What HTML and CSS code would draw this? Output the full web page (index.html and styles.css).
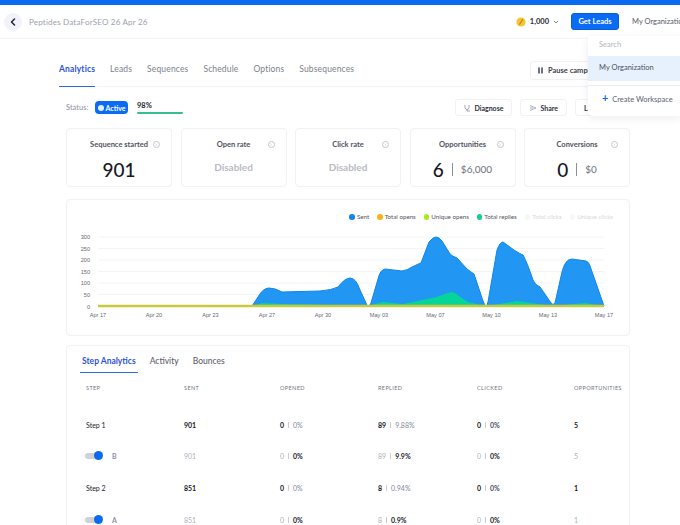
FILE: index.html
```html
<!DOCTYPE html>
<html lang="en">
<head>
    <meta charset="UTF-8">
    <meta name="viewport" content="width=device-width, initial-scale=1.0">
    <title>Peptides DataForSEO - Analytics</title>
    <link rel="stylesheet" href="styles.css">
</head>
<body>
    <div class="app">
        <div class="top-strip"></div>

        <!-- Header -->
        <header class="header">
            <button class="back-btn">
                <svg width="8" height="8" viewBox="0 0 8 8"><path d="M5.5 1 L2.5 4 L5.5 7" fill="none" stroke="#23233a" stroke-width="1.5" stroke-linecap="round" stroke-linejoin="round"/></svg>
            </button>
            <span class="campaign-name">Peptides DataForSEO 26 Apr 26</span>
            <span class="credits">
                <svg width="10" height="10" viewBox="0 0 10 10"><circle cx="5" cy="5" r="4.6" fill="#f7c531"/><path d="M6.5 2.6 L3.6 7.2" stroke="#b98a1c" stroke-width="1.2" stroke-linecap="round"/></svg>
                <b>1,000</b>
                <svg class="chev" width="6" height="4" viewBox="0 0 6 4"><path d="M1 1 L3 3 L5 1" fill="none" stroke="#666" stroke-width="0.8"/></svg>
            </span>
            <button class="get-leads">Get Leads</button>
            <span class="org-name">My Organizatio..</span>
        </header>

        <!-- Workspace menu -->
        <div class="org-menu">
            <div class="org-search">Search</div>
            <div class="org-item">My Organization</div>
            <div class="org-create"><span class="plus">+</span> Create Workspace</div>
        </div>

        <main class="content">
            <!-- Tabs -->
            <nav class="tabs">
                <a class="tab tab-active">Analytics</a>
                <a class="tab">Leads</a>
                <a class="tab">Sequences</a>
                <a class="tab">Schedule</a>
                <a class="tab">Options</a>
                <a class="tab">Subsequences</a>
                <button class="pause-btn">
                    <svg width="7" height="7" viewBox="0 0 7 7"><path d="M1 0.5h2v6H1zM4 0.5h2v6H4z" fill="#6b7288"/></svg>
                    Pause campaign
                </button>
            </nav>

            <!-- Status row -->
            <div class="status-row">
                <span class="status-label">Status:</span>
                <span class="active-badge"><i class="badge-dot"></i>Active</span>
                <div class="progress">
                    <span class="progress-num">98%</span>
                    <div class="progress-bar"></div>
                </div>
                <div class="status-actions">
                    <button class="small-btn">
                        <svg width="7" height="8" viewBox="0 0 7 8"><path d="M1 1v2.5a2 2 0 0 0 4 0V1M3 5.5V7h3" fill="none" stroke="#8a90a0" stroke-width="0.8"/></svg>
                        Diagnose
                    </button>
                    <button class="small-btn">
                        <svg width="8" height="8" viewBox="0 0 8 8"><path d="M1 1.5 L7 4 L1 6.5 M1 4h3" fill="none" stroke="#a3a8b5" stroke-width="0.9"/></svg>
                        Share
                    </button>
                    <button class="small-btn range-btn">
                        Last 4 weeks
                        <svg width="6" height="4" viewBox="0 0 6 4"><path d="M1 1 L3 3 L5 1" fill="none" stroke="#666" stroke-width="0.8"/></svg>
                    </button>
                </div>
            </div>

            <!-- Stat cards -->
            <section class="stats">
                <div class="stat-card">
                    <h3 class="stat-title">Sequence started<i class="info">i</i></h3>
                    <div class="stat-value">901</div>
                </div>
                <div class="stat-card">
                    <h3 class="stat-title">Open rate<i class="info">i</i></h3>
                    <div class="stat-disabled">Disabled</div>
                </div>
                <div class="stat-card">
                    <h3 class="stat-title">Click rate<i class="info">i</i></h3>
                    <div class="stat-disabled">Disabled</div>
                </div>
                <div class="stat-card">
                    <h3 class="stat-title">Opportunities<i class="info">i</i></h3>
                    <div class="stat-value">6<span class="stat-sep"></span><span class="stat-sub">$6,000</span></div>
                </div>
                <div class="stat-card">
                    <h3 class="stat-title">Conversions<i class="info">i</i></h3>
                    <div class="stat-value">0<span class="stat-sep"></span><span class="stat-sub">$0</span></div>
                </div>
            </section>

            <!-- Chart -->
            <section class="chart-card">
                <div class="legend">
                    <span class="legend-item"><i class="dot dot-sent"></i>Sent</span>
                    <span class="legend-item"><i class="dot dot-opens"></i>Total opens</span>
                    <span class="legend-item"><i class="dot dot-unique"></i>Unique opens</span>
                    <span class="legend-item"><i class="dot dot-replies"></i>Total replies</span>
                    <span class="legend-item legend-off"><i class="dot dot-off"></i>Total clicks</span>
                    <span class="legend-item legend-off"><i class="dot dot-off"></i>Unique clicks</span>
                </div>
                <svg class="chart" width="564" height="98" viewBox="66 225 564 98">
                    <g stroke="#f0f1f4" stroke-width="0.8">
                        <path d="M98 237H604M98 248.500H604M98 260H604M98 271.500H604M98 283H604M98 294.500H604"/>
                    </g>
                    <g class="axis-y" text-anchor="end">
                        <text x="90" y="239">300</text>
                        <text x="90" y="250.500">250</text>
                        <text x="90" y="262">200</text>
                        <text x="90" y="273.500">150</text>
                        <text x="90" y="285">100</text>
                        <text x="90" y="296.500">50</text>
                        <text x="90" y="308.500">0</text>
                    </g>
                    <path d="M252 306 L258 297 Q263 288 269 288 Q275 288 282 292 L320 291 Q332 290 338 287 Q345 278 350 278 Q356 278 360 290 L366 303 Q367 306 368 306 Q370 306 371 303 L378 279 Q380 270 385 269 L402 271 Q408 270 412 267 Q418 264 421 263 L429 242 Q433 237 436 237 Q439 237 442 241 L450 254 Q452 256 457 258 L467 269 Q471 272 474 274 L483 301 Q485 306 486 306 Q487 306 488 302 L497 250 Q500 242 503 242 L514 250 Q520 254 523 255 Q527 262 533 280 Q535 285 540 287 Q545 294 551 303 Q553 306 555 303 L562 272 Q565 259 572 259 L586 261 Q589 262 590 266 L604 306 Z" fill="#2196f3" stroke="#0e86ea" stroke-width="1"/>
                    <path d="M252 306 L262 303 L285 304 L340 305 L368 306 L383 302 L403 304 L437 297 Q446 293 452 292 Q456 293 459 296 L468 302 L486 306 L517 301 L553 306 L585 303 L604 306 Z" fill="#06d59a"/>
                    <path d="M98 306H604" stroke="#c9c93c" stroke-width="2.400"/>
                    <g class="axis-x" text-anchor="middle">
                        <text x="98" y="317">Apr 17</text>
                        <text x="154" y="317">Apr 20</text>
                        <text x="210.500" y="317">Apr 23</text>
                        <text x="267" y="317">Apr 27</text>
                        <text x="323" y="317">Apr 30</text>
                        <text x="379" y="317">May 03</text>
                        <text x="435.500" y="317">May 07</text>
                        <text x="491.500" y="317">May 10</text>
                        <text x="548" y="317">May 13</text>
                        <text x="604" y="317">May 17</text>
                    </g>
                </svg>
            </section>

            <!-- Step table -->
            <section class="table-card">
                <div class="table-tabs">
                    <a class="table-tab table-tab-active">Step Analytics</a>
                    <a class="table-tab">Activity</a>
                    <a class="table-tab">Bounces</a>
                </div>
                <div class="step-table">
                    <div class="th">Step</div><div class="th">Sent</div><div class="th">Opened</div><div class="th">Replied</div><div class="th">Clicked</div><div class="th">Opportunities</div>

                    <div class="td">Step 1</div>
                    <div class="td"><b>901</b></div>
                    <div class="td"><b>0</b><i class="sep"></i><span class="pct">0%</span></div>
                    <div class="td"><b>89</b><i class="sep"></i><span class="pct">9.88%</span></div>
                    <div class="td"><b>0</b><i class="sep"></i><span class="pct-dark">0%</span></div>
                    <div class="td"><b>5</b></div>

                    <div class="td"><span class="toggle"><i class="knob"></i></span><span class="variant">B</span></div>
                    <div class="td muted">901</div>
                    <div class="td muted">0<i class="sep"></i><span class="pct-bold">0%</span></div>
                    <div class="td muted">89<i class="sep"></i><span class="pct-bold">9.9%</span></div>
                    <div class="td muted">0<i class="sep"></i><span class="pct-bold">0%</span></div>
                    <div class="td muted">5</div>

                    <div class="td">Step 2</div>
                    <div class="td"><b>851</b></div>
                    <div class="td"><b>0</b><i class="sep"></i><span class="pct">0%</span></div>
                    <div class="td"><b>8</b><i class="sep"></i><span class="pct">0.94%</span></div>
                    <div class="td"><b>0</b><i class="sep"></i><span class="pct-dark">0%</span></div>
                    <div class="td"><b>1</b></div>

                    <div class="td"><span class="toggle"><i class="knob"></i></span><span class="variant">A</span></div>
                    <div class="td muted">851</div>
                    <div class="td muted">0<i class="sep"></i><span class="pct-bold">0%</span></div>
                    <div class="td muted">8<i class="sep"></i><span class="pct-bold">0.9%</span></div>
                    <div class="td muted">0<i class="sep"></i><span class="pct-bold">0%</span></div>
                    <div class="td muted">1</div>
                </div>
            </section>
        </main>
    </div>
</body>
</html>
```

FILE: styles.css
```css
* {
    margin: 0;
    padding: 0;
    box-sizing: border-box;
}

html, body {
    height: 100%;
    overflow: hidden;
}

body {
    font-family: 'Lato', 'Liberation Sans', sans-serif;
    background: #ffffff;
    color: #1c1c28;
}

button {
    font-family: inherit;
    cursor: pointer;
}

i {
    font-style: normal;
}

.app {
    position: relative;
    height: 525px;
    overflow: hidden;
}

.top-strip {
    height: 5px;
    background: #0a6bf0;
}

/* Header */
.header {
    height: 34px;
    display: flex;
    align-items: center;
    padding: 0 0 0 4px;
    border-bottom: 1px solid #f6f6f8;
}

.back-btn {
    width: 18px;
    height: 18px;
    border: none;
    border-radius: 50%;
    background: #f2f2fb;
    display: flex;
    align-items: center;
    justify-content: center;
}

.campaign-name {
    margin-left: 7px;
    font-size: 8px;
    color: #9da1ad;
    letter-spacing: 0.2px;
}

.credits {
    margin-left: auto;
    display: flex;
    align-items: center;
    gap: 4px;
    font-size: 7.500px;
    color: #2a2a38;
}

.get-leads {
    margin-left: 12px;
    width: 48px;
    height: 17px;
    border: 1px solid #0a5fd8;
    border-radius: 3px;
    background: #0a6bf5;
    color: #ffffff;
    font-size: 7.500px;
    font-weight: 700;
}

.org-name {
    margin-left: 13px;
    width: 48px;
    white-space: nowrap;
    font-size: 7.500px;
    color: #555a68;
}

.org-menu {
    position: absolute;
    top: 36px;
    left: 588px;
    width: 92px;
    height: 80px;
    background: #ffffff;
    border-radius: 0 0 0 5px;
    box-shadow: 0 2px 8px rgba(30, 30, 60, 0.08);
    font-size: 7.500px;
    z-index: 5;
}

.org-search {
    height: 20px;
    padding: 3px 0 0 11px;
    line-height: 12px;
    color: #b4b7c0;
}

.org-item {
    height: 25px;
    padding-left: 11px;
    line-height: 24px;
    background: #e6f1fd;
    color: #4a5064;
}

.org-create {
    margin-top: 4px;
    padding: 8px 0 0 14px;
    border-top: 1px solid #ececf0;
    color: #596074;
}

.plus {
    color: #0a6bf0;
    font-size: 11px;
    font-weight: 700;
    line-height: 8px;
    margin-right: 2px;
}

/* Main */
.content {
    padding: 0 50px 0 59px;
}

.tabs {
    height: 48px;
    display: flex;
    align-items: flex-end;
    gap: 15px;
    border-bottom: 1px solid #f2f2f5;
    font-size: 8.500px;
}

.tab {
    padding-bottom: 12px;
    color: #7b7f8c;
    letter-spacing: 0.15px;
    border-bottom: 1px solid transparent;
    margin-bottom: -1px;
}

.tab-active {
    color: #2a55d8;
    font-weight: 700;
    border-bottom: 1px solid #2a6be0;
}

.pause-btn {
    margin: 0 0 6px auto;
    width: 100px;
    height: 19px;
    padding-left: 6px;
    display: flex;
    align-items: center;
    gap: 4px;
    border: 1px solid #f2f2f5;
    border-radius: 3px;
    background: #ffffff;
    color: #3a3d4a;
    font-size: 7.500px;
    font-weight: 700;
    white-space: nowrap;
}

.status-row {
    height: 41px;
    padding-left: 7px;
    display: flex;
    align-items: center;
    font-size: 7.500px;
}

.status-label {
    color: #8d919e;
    width: 29px;
}

.active-badge {
    width: 33px;
    height: 13px;
    display: flex;
    align-items: center;
    justify-content: center;
    gap: 2px;
    border-radius: 4px;
    background: #0a6bf5;
    color: #ffffff;
    font-weight: 700;
    font-size: 7px;
}

.badge-dot {
    width: 6px;
    height: 6px;
    border-radius: 50%;
    background: #e3eefe;
}

.progress {
    margin-left: 9px;
    width: 46px;
    padding-top: 1px;
}

.progress-num {
    display: block;
    height: 10px;
    font-weight: 700;
    color: #23232e;
    font-size: 7.500px;
    line-height: 8px;
}

.progress-bar {
    height: 2px;
    border-radius: 1px;
    background: #35c08e;
}

.status-actions {
    margin-left: auto;
    margin-right: -29px;
    display: flex;
    gap: 8px;
}

.small-btn {
    height: 17px;
    padding: 0 8px;
    display: flex;
    align-items: center;
    gap: 3px;
    border: 1px solid #f2f2f5;
    border-radius: 3px;
    background: #ffffff;
    color: #2e3040;
    font-size: 7px;
    font-weight: 700;
}

.range-btn {
    width: 84px;
    justify-content: space-between;
}

/* Stat cards */
.stats {
    margin-left: 7px;
    display: grid;
    grid-template-columns: repeat(5, 1fr);
    gap: 8.500px;
}

.stat-card {
    height: 59px;
    border: 1px solid #f2f2f5;
    border-radius: 4px;
    background: #ffffff;
    text-align: center;
}

.stat-title {
    position: relative;
    padding-top: 11px;
    font-size: 7.500px;
    font-weight: 700;
    color: #50535f;
    line-height: 10px;
}

.info {
    position: absolute;
    top: 12px;
    right: 11px;
    width: 7px;
    height: 7px;
    border: 1px solid #c4c6ce;
    border-radius: 50%;
    color: #b0b3bc;
    font-size: 4px;
    font-weight: 400;
    line-height: 5px;
}

.stat-value {
    margin-top: 8px;
    display: flex;
    align-items: center;
    justify-content: center;
    height: 22px;
    font-size: 19px;
    font-weight: 500;
    color: #17171f;
}

.stat-sep {
    width: 1px;
    height: 13px;
    margin: 0 8px;
    background: #8a8fa3;
}

.stat-sub {
    font-size: 10px;
    color: #777c8c;
}

.stat-disabled {
    margin-top: 11px;
    font-size: 10px;
    font-weight: 700;
    color: #b9bbc2;
}

/* Chart */
.chart-card {
    margin: 12px 0 0 7px;
    height: 137px;
    border: 1px solid #f2f2f5;
    border-radius: 4px;
}

.legend {
    height: 25px;
    padding: 13px 16px 0 0;
    display: flex;
    justify-content: flex-end;
    gap: 8px;
    font-size: 6.200px;
    color: #50535f;
}

.legend-item {
    display: flex;
    align-items: center;
    gap: 2px;
    line-height: 8px;
    height: 8px;
}

.legend-off {
    color: #d6d8de;
}

.dot {
    width: 5.500px;
    height: 5.500px;
    border-radius: 50%;
}

.dot-sent { background: #1287ea; }
.dot-opens { background: #f9b31c; }
.dot-unique { background: #a8ea1a; }
.dot-replies { background: #12cf96; }
.dot-off { background: #f6f8f8; }

.chart {
    display: block;
    margin-left: -1px;
}

.chart text {
    font-family: 'Liberation Sans', sans-serif;
    font-size: 5.600px;
    fill: #666a75;
}

/* Step table */
.table-card {
    margin: 9px 0 0 7px;
    height: 220px;
    padding: 0 13px;
    border: 1px solid #f2f2f5;
    border-radius: 4px;
}

.table-tabs {
    height: 27px;
    display: flex;
    align-items: flex-end;
    gap: 10px;
    font-size: 8.500px;
    font-weight: 500;
    color: #5f6270;
}

.table-tab {
    padding: 0 2px 6px;
    border-bottom: 1px solid transparent;
}

.table-tab-active {
    color: #2a55d8;
    font-weight: 700;
    border-bottom: 1px solid #2a6be0;
}

.step-table {
    margin-top: 10px;
    padding-left: 6px;
    display: grid;
    grid-template-columns: 98px 96px 98px 99px 97px 60px;
    grid-auto-rows: 31.700px;
    font-size: 7px;
}

.th {
    height: 14px;
    font-size: 5.500px;
    letter-spacing: 0.4px;
    text-transform: uppercase;
    color: #71757f;
    white-space: nowrap;
    line-height: 10px;
}

.td {
    display: flex;
    align-items: center;
    height: 20px;
    color: #23232e;
}

.td b {
    color: #17171f;
}

.sep {
    width: 1px;
    height: 6px;
    margin: 0 4px;
    background: #c9ccd4;
}

.pct {
    color: #7f889e;
}

.pct-dark {
    color: #4a5064;
    font-weight: 700;
}

.pct-bold {
    color: #23232e;
    font-weight: 700;
}

.muted {
    color: #aeb1ba;
}

.toggle {
    position: relative;
    display: inline-block;
    width: 16px;
    height: 6px;
    margin-left: -1px;
    border-radius: 3px;
    background: #cfd1d6;
}

.knob {
    position: absolute;
    top: -2px;
    right: -2px;
    width: 9px;
    height: 9px;
    border-radius: 50%;
    background: #0a6bf0;
}

.variant {
    margin-left: 11px;
    color: #8a8fa0;
    font-weight: 700;
}
```
